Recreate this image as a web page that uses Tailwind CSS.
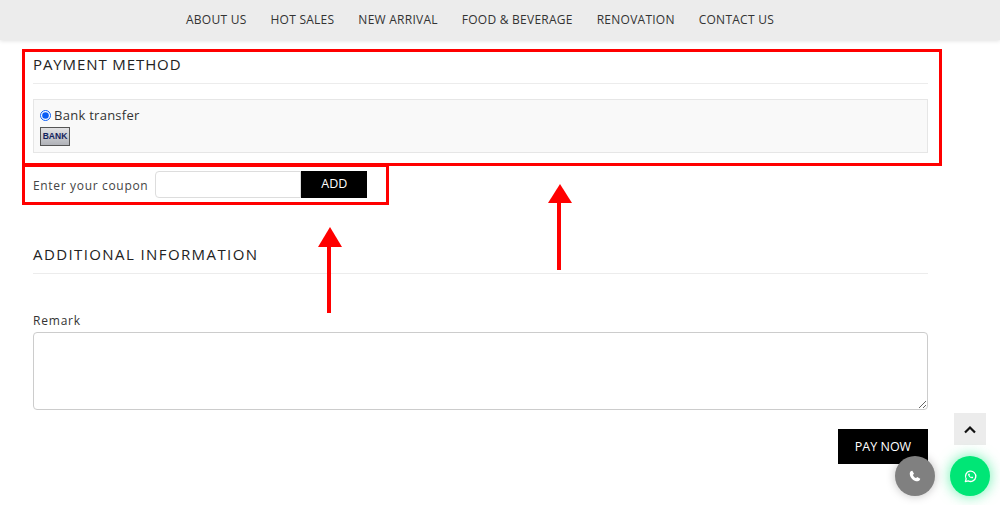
<!DOCTYPE html>
<html lang="en">
<head>
    <meta charset="UTF-8">
    <title>Checkout</title>
    <script src="https://cdn.jsdelivr.net/npm/@tailwindcss/browser@4"></script>
</head>
<body class="bg-white font-['Open_Sans',sans-serif] text-[#333] overflow-hidden">
<div class="relative w-[1000px] h-[505px] overflow-hidden">
    <!-- Nav -->
    <nav class="h-[40px] bg-[#ececec] shadow-[0_1px_4px_rgba(0,0,0,0.12)] flex items-center justify-center gap-[24px] text-[12px] tracking-[0.25px] text-[#333] pr-[40px]">
        <a>ABOUT US</a>
        <a>HOT SALES</a>
        <a>NEW ARRIVAL</a>
        <a>FOOD &amp; BEVERAGE</a>
        <a>RENOVATION</a>
        <a>CONTACT US</a>
    </nav>

    <main class="w-[895px] ml-[33px]">
        <h2 class="mt-[14px] h-[30px] border-b border-[#ececec] text-[15px] leading-[20px] tracking-[0.9px] text-[#222]">PAYMENT METHOD</h2>
        <div class="mt-[15px] h-[54px] border border-[#e6e6e6] bg-[#f9f9f9] pl-[6px] pt-[7px]">
            <label class="flex items-center h-[18px] text-[13px] tracking-[0.27px] text-[#333]">
                <input type="radio" checked class="w-[11px] h-[11px] mr-[3px] -mt-[1px] accent-[#0a5cf5]">
                Bank transfer
            </label>
            <div class="mt-[2px] w-[30px] h-[19px] border border-[#555] bg-gradient-to-b from-[#e2e2e4] to-[#b0b2b8] flex items-center justify-center text-[8.500px] font-extrabold text-[#14235e] leading-none font-['Liberation_Sans',sans-serif]">BANK</div>
        </div>

        <div class="mt-[18px] flex items-center h-[27px]">
            <span class="pt-[2px] text-[12px] tracking-[0.67px] text-[#444] mr-[7px]">Enter your coupon</span>
            <input type="text" class="w-[146px] h-[27px] bg-white border border-[#ddd] rounded-l-[4px]">
            <button class="w-[66px] h-[27px] bg-black text-white text-[12.500px] font-medium">ADD</button>
        </div>

        <h2 class="mt-[46px] h-[30px] border-b border-[#ececec] text-[15px] leading-[20px] tracking-[1.4px] text-[#222]">ADDITIONAL INFORMATION</h2>

        <div class="mt-[39px] text-[12px] leading-[16px] tracking-[0.8px] text-[#333]">Remark</div>
        <textarea class="block mt-[3px] w-[895px] h-[78px] border border-[#ccc] rounded-[4px] bg-white"></textarea>

        <div class="flex justify-end mt-[19px]">
            <button class="w-[90px] h-[35px] pt-[2px] bg-black text-white text-[12.500px] font-medium">PAY NOW</button>
        </div>
    </main>

    <!-- Annotations -->
    <div class="absolute left-[22px] top-[49px] w-[920px] h-[117px] border-[3px] border-[#ff0000]"></div>
    <div class="absolute left-[22px] top-[164px] w-[367px] h-[41px] border-[3px] border-[#ff0000]"></div>
    <svg class="absolute left-[310px] top-[180px]" width="270" height="135" viewBox="0 0 270 135" fill="#ff0000">
        <path d="M8 67 20 47 32 67z"/>
        <rect x="17" y="66" width="4" height="67"/>
        <path d="M238 23 250 4 262 23z"/>
        <rect x="247" y="22" width="4" height="68"/>
    </svg>

    <!-- Back to top -->
    <div class="absolute left-[954px] top-[413px] w-[32px] h-[32px] bg-[#ececec] flex items-center justify-center">
        <svg width="14" height="9" viewBox="0 0 14 9" fill="none" stroke="#111" stroke-width="2.200"><path d="M2 7.500 7 2.500l5 5"/></svg>
    </div>

    <!-- Phone -->
    <div class="absolute left-[895px] top-[456px] w-[40px] h-[40px] rounded-full bg-[#808080] shadow-[0_0_10px_rgba(0,0,0,0.25)] flex items-center justify-center">
        <svg width="12" height="12" viewBox="0 0 24 24" fill="#fff"><path d="M6.600 1.500 10 7.500 7.800 9.800c1.200 2.900 3.500 5.200 6.400 6.400l2.300-2.200 6 3.400c-.4 2.900-2.500 5.100-5.300 5.100C9 22.500 1.500 15 1.500 6.800c0-2.800 2.200-4.900 5.100-5.300z"/></svg>
    </div>

    <!-- Whatsapp -->
    <div class="absolute left-[950px] top-[456px] w-[40px] h-[40px] rounded-full bg-[#00e676] shadow-[0_0_14px_rgba(0,230,118,0.6)] flex items-center justify-center">
        <svg width="13" height="13" viewBox="0 0 24 24" fill="none"><path d="M2.500 21.500 4 16.300A9.500 9.500 0 1 1 7.800 20z" stroke="#fff" stroke-width="2.400" stroke-linejoin="round"/><path fill="#fff" d="M8.800 7c.5-.5 1-.4 1.300.1l.8 1.700c.1.300 0 .6-.2.800l-.6.700c.7 1.300 1.700 2.300 3.200 3l.8-.9c.2-.2.500-.3.800-.2l1.600.8c.4.200.5.600.3 1.100-.4 1-1.500 1.500-2.600 1.300-3.300-.7-5.800-3.100-6.600-6-.2-.9.100-1.800.4-2.400z"/></svg>
    </div>
</div>
</body>
</html>
